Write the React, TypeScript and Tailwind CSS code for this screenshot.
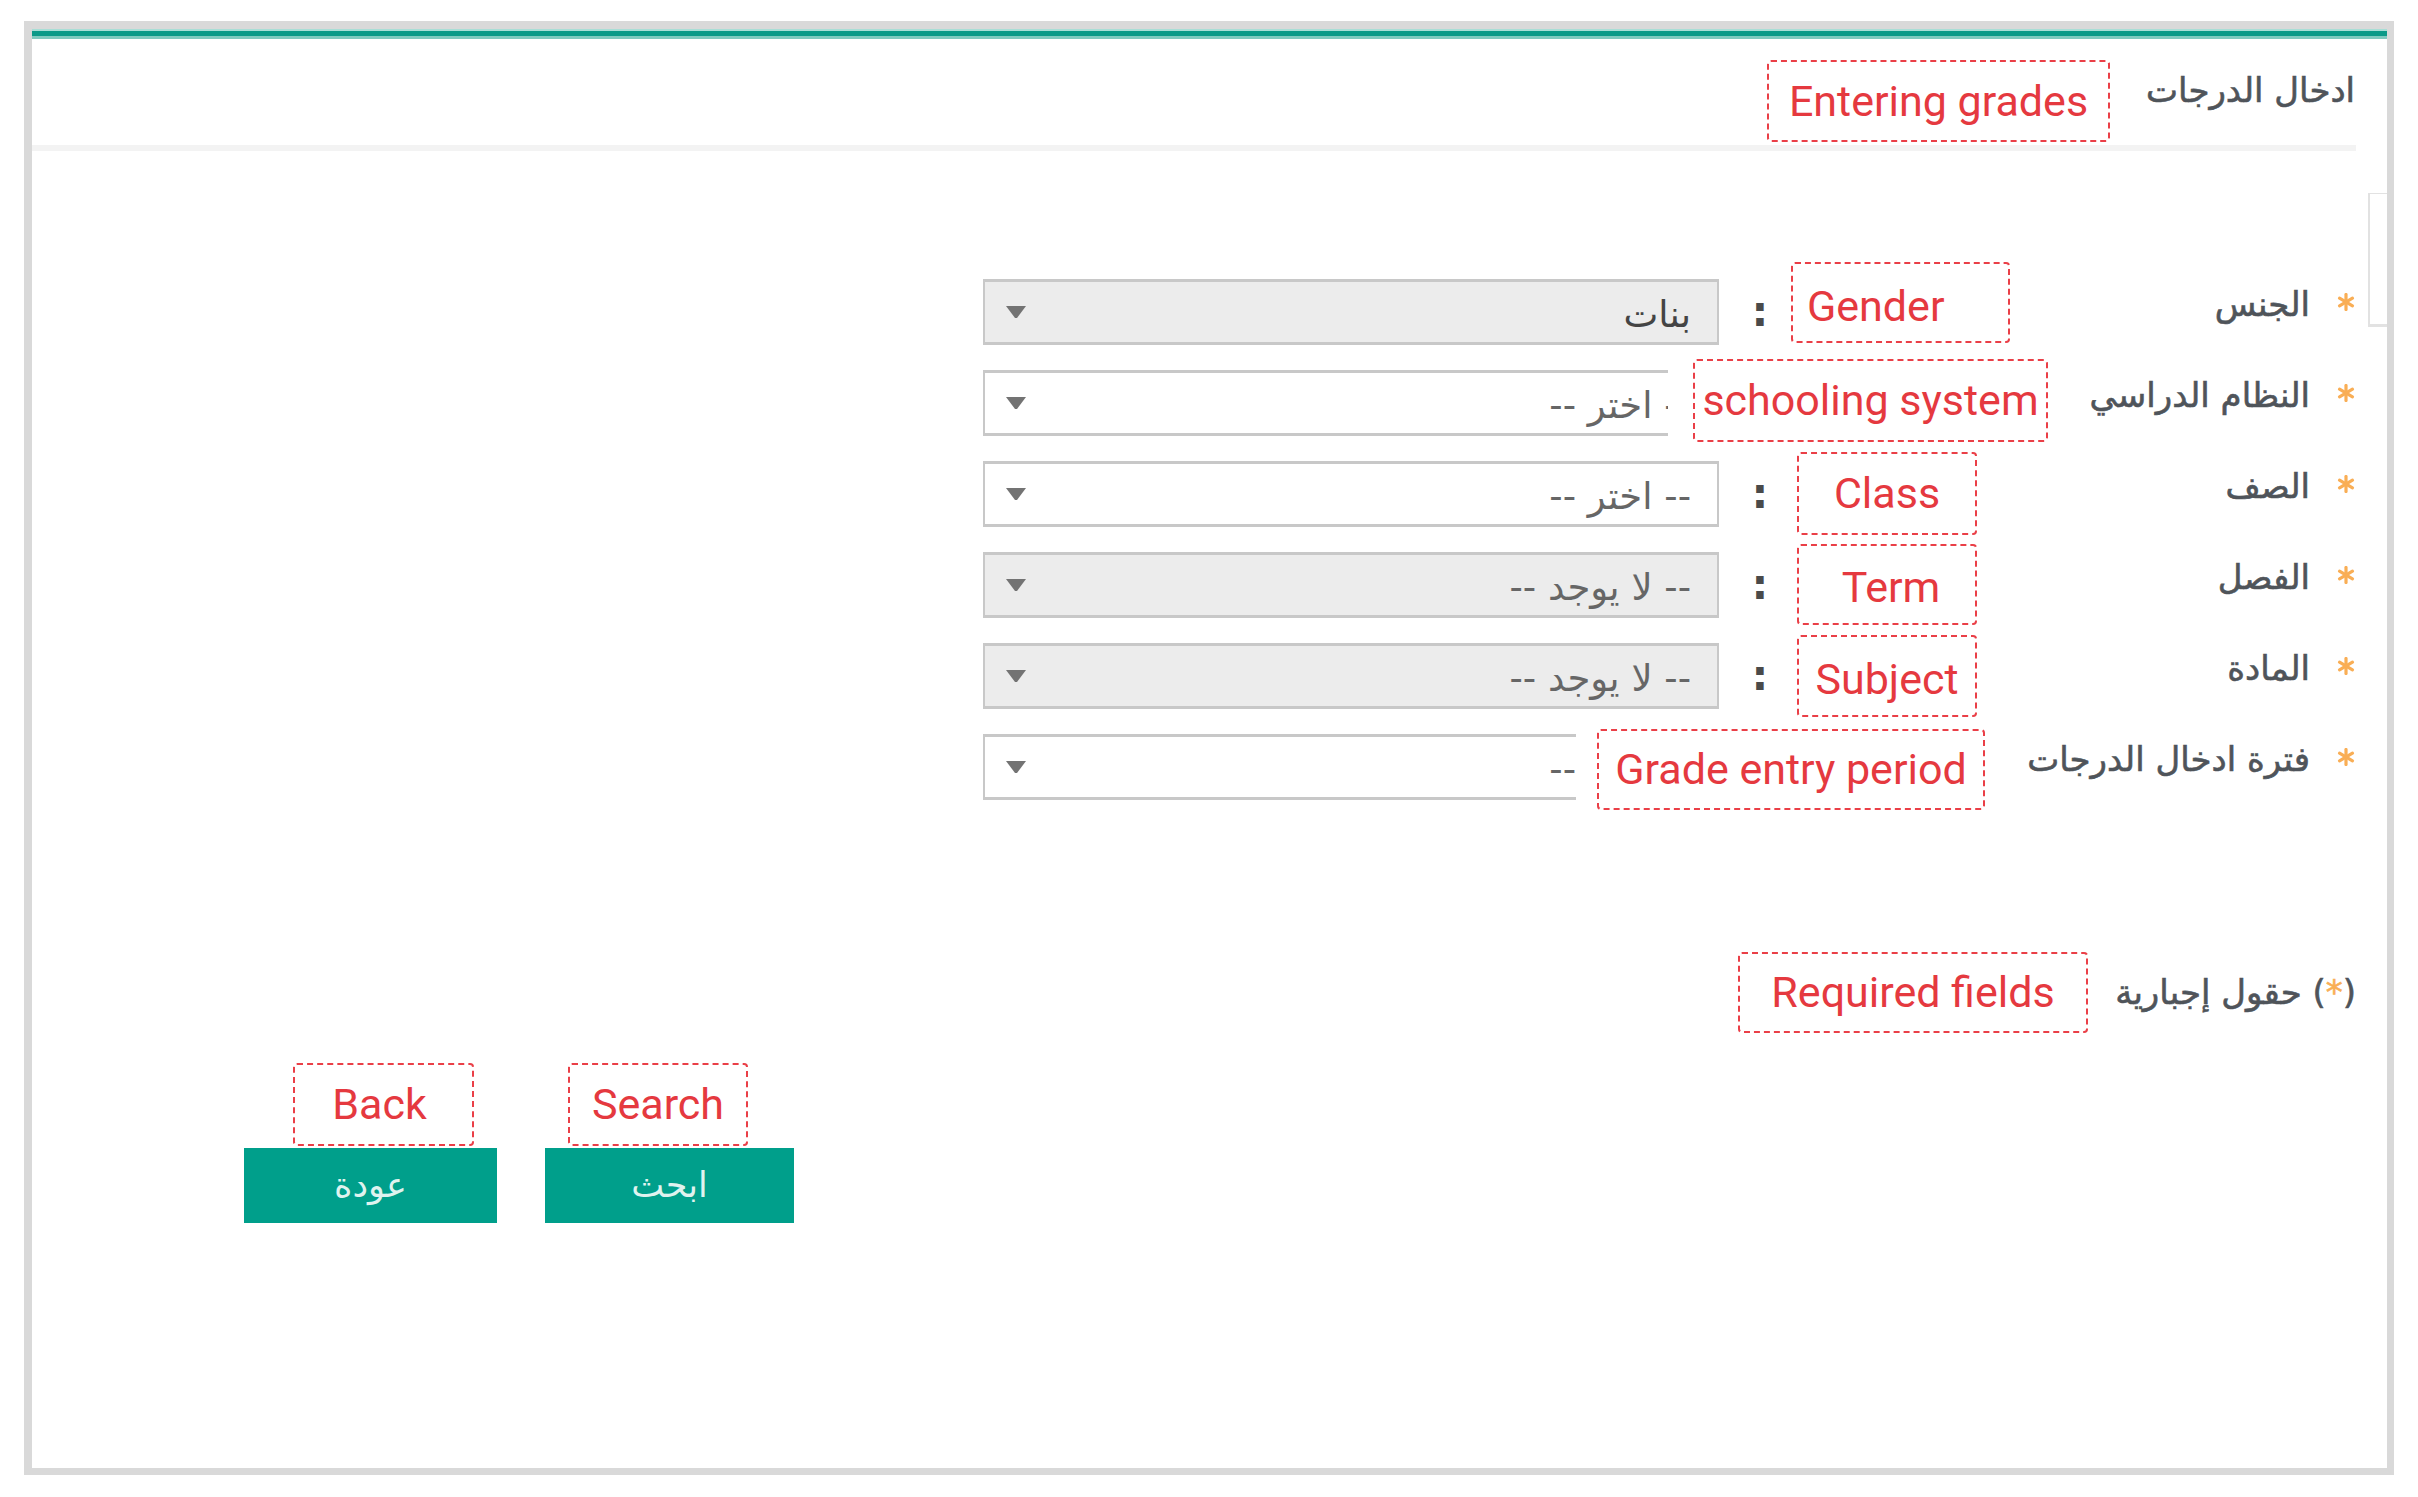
import React from "react";

const AR = "font-['DejaVu_Sans',sans-serif]";
const THICK = "[-webkit-text-stroke:0.6px_currentColor]";

function Star() {
  return (
    <svg width="18" height="18" viewBox="0 0 18 18">
      <g stroke="#f9ae55" strokeWidth="3.2" strokeLinecap="round">
        <line x1="9" y1="1.5" x2="9" y2="16.5" />
        <line x1="2.5" y1="5.2" x2="15.5" y2="12.8" />
        <line x1="2.5" y1="12.8" x2="15.5" y2="5.2" />
      </g>
    </svg>
  );
}

function Arrow() {
  return (
    <svg width="22" height="14" viewBox="0 0 22 14">
      <polygon points="1,1 21,1 12,13 10,13" fill="#737373" />
    </svg>
  );
}

type Row = { label: string; value: string; disabled: boolean; strong?: boolean };

const rows: Row[] = [
  { label: "الجنس", value: "بنات", disabled: true, strong: true },
  { label: "النظام الدراسي", value: "-- اختر --", disabled: false },
  { label: "الصف", value: "-- اختر --", disabled: false },
  { label: "الفصل", value: "-- لا يوجد --", disabled: true },
  { label: "المادة", value: "-- لا يوجد --", disabled: true },
  { label: "فترة ادخال الدرجات", value: "-- اختر --", disabled: false },
];

function FormRow({ row }: { row: Row }) {
  return (
    <div dir="rtl" className="flex items-center h-[66px] pr-[32px]">
      <div className="w-[18px] flex justify-center -translate-y-[10px]">
        <Star />
      </div>
      <div className={`w-[530px] mr-[27px] text-[34px] leading-none text-[#4f545a] -translate-y-[8px] ${THICK} ${AR}`}>
        {row.label}
      </div>
      <div className={`w-[40px] text-center text-[42px] font-bold leading-none text-[#4a4a4a] ${AR}`}>:</div>
      <div
        className={`w-[736px] h-[66px] mr-[21px] flex items-center justify-between pr-[26px] pl-[20px] border-2 border-t-[3px] border-b-[3px] border-[#c8c8c8] ${
          row.disabled ? "bg-[#ececec]" : "bg-white"
        }`}
      >
        <span className={`text-[37px] leading-none translate-y-[2px] ${row.strong ? "text-[#444]" : "text-[#666]"} ${AR}`}>{row.value}</span>
        <Arrow />
      </div>
    </div>
  );
}

const box =
  "absolute flex items-center border-2 border-dashed border-[#ea3f47] rounded-[4px] bg-white font-['Roboto',sans-serif] text-[43px] leading-none text-[#e5393f] whitespace-nowrap";

export default function App() {
  return (
    <div className="relative w-[2418px] h-[1497px] bg-white overflow-hidden pt-[21px] pl-[24px]">
      <div className="w-[2370px] h-[1454px] border-[#d9d9d9] border-t-8 border-l-8 border-r-[7px] border-b-[7px] flex flex-col">
        {/* teal top line */}
        <div className="h-[10px] bg-[#0b9a88] border-t-2 border-t-[#a9ded6] border-b-[3px] border-b-[#7fcabf]" />
        {/* header */}
        <div dir="rtl" className="h-[106px] flex items-center pr-[32px]">
          <span className={`text-[34px] leading-none text-[#4f545a] -translate-y-[2px] ${THICK} ${AR}`}>ادخال الدرجات</span>
        </div>
        <div className="h-[6px] bg-[#f3f3f3] mr-[31px]" />

        {/* form */}
        <div className="pt-[128px] flex flex-col gap-[25px]">
          {rows.map((r) => (
            <FormRow key={r.label} row={r} />
          ))}
        </div>

        {/* required fields note */}
        <div dir="rtl" className="mt-[162px] h-[60px] flex items-center pr-[31px]">
          <span className={`text-[34px] leading-none text-[#4f545a] ${THICK} ${AR}`}>
            (<span className="text-[#f9ae55]">*</span>) حقول إجبارية
          </span>
        </div>

        {/* buttons */}
        <div className="mt-[126px] pl-[212px] flex gap-[48px]">
          <button className={`w-[253px] h-[75px] bg-[#009f8b] text-[#dff3ef] text-[35px] leading-none ${AR}`}>عودة</button>
          <button className={`w-[249px] h-[75px] bg-[#009f8b] text-[#dff3ef] text-[35px] leading-none ${AR}`}>ابحث</button>
        </div>
      </div>

      {/* scrollbar fragment */}
      <div className="absolute left-[2368px] top-[193px] w-[19px] h-[134px] border-l-2 border-b-[3px] border-t border-[#e2e2e2]" />

      {/* annotations */}
      <div className={`${box} left-[1767px] top-[60px] w-[343px] h-[82px] justify-center`}>Entering grades</div>
      <div className={`${box} left-[1791px] top-[262px] w-[219px] h-[81px] pl-[14px] pt-[8px]`}>Gender</div>
      <div className={`${box} left-[1693px] top-[359px] w-[355px] h-[83px] justify-center shadow-[-25px_0_0_white]`}>schooling system</div>
      <div className={`${box} left-[1797px] top-[452px] w-[180px] h-[83px] justify-center`}>Class</div>
      <div className={`${box} left-[1797px] top-[544px] w-[180px] h-[81px] justify-center pl-[8px] pt-[6px]`}>Term</div>
      <div className={`${box} left-[1797px] top-[635px] w-[180px] h-[82px] justify-center pt-[6px]`}>Subject</div>
      <div className={`${box} left-[1597px] top-[729px] w-[388px] h-[81px] justify-center shadow-[-21px_0_0_white]`}>Grade entry period</div>
      <div className={`${box} left-[1738px] top-[952px] w-[350px] h-[81px] justify-center`}>Required fields</div>
      <div className={`${box} left-[293px] top-[1063px] w-[181px] h-[83px] justify-center pr-[8px]`}>Back</div>
      <div className={`${box} left-[568px] top-[1063px] w-[180px] h-[83px] justify-center`}>Search</div>
    </div>
  );
}
